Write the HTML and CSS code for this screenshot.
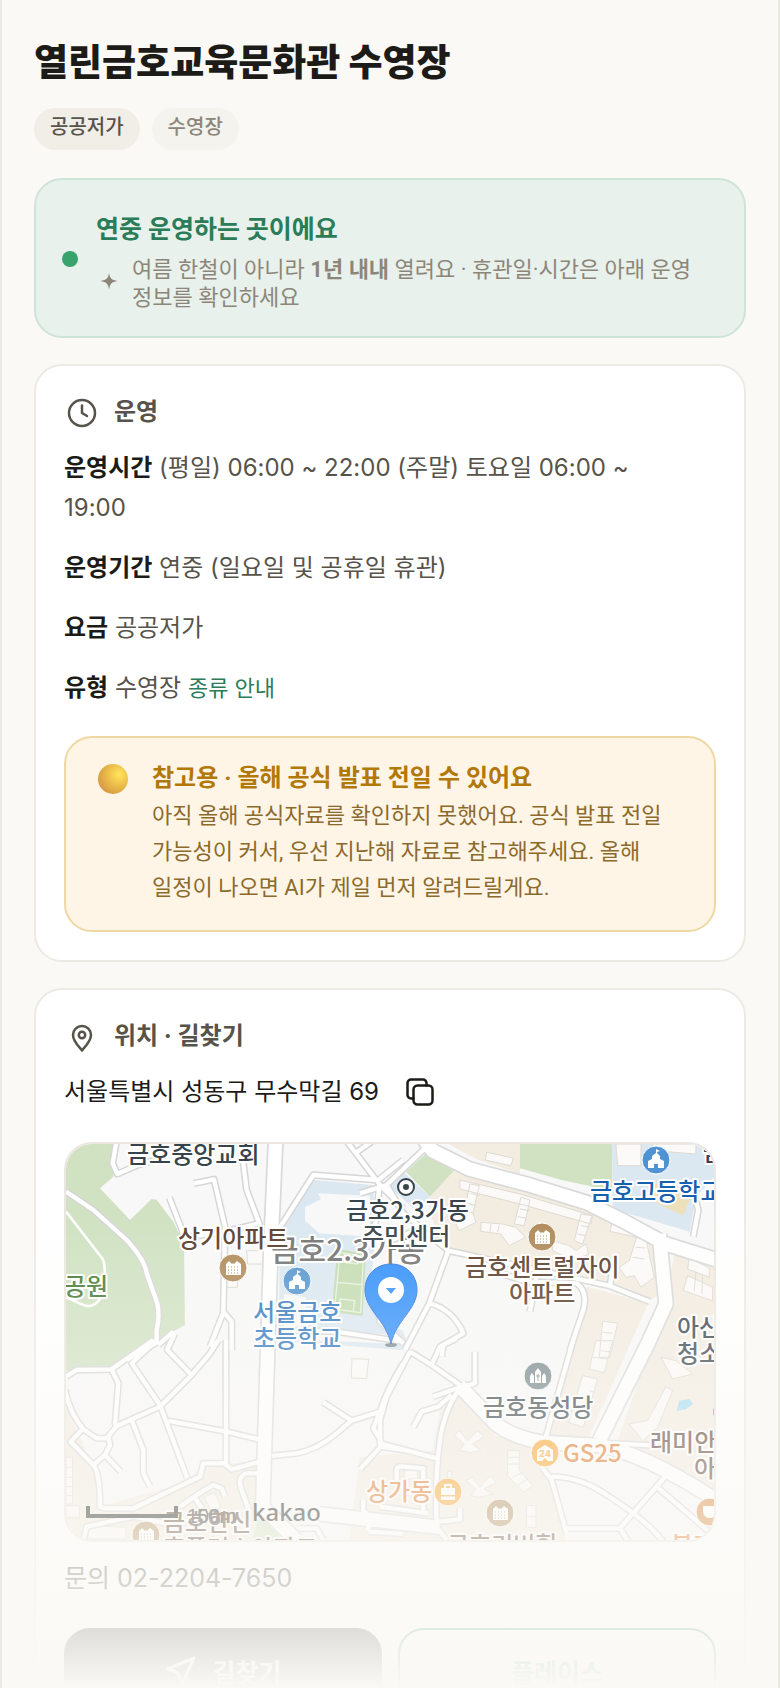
FILE: index.html
```html
<!DOCTYPE html>
<html lang="ko">
<head>
<meta charset="utf-8">
<meta name="viewport" content="width=device-width, initial-scale=1">
<title>열린금호교육문화관 수영장</title>
<link rel="stylesheet" href="styles.css">
</head>
<body>
<main class="page">
  <header class="heading">
    <h1 class="title">열린금호교육문화관 수영장</h1>
    <div class="tags">
      <span class="tag">공공저가</span>
      <span class="tag tag-soft">수영장</span>
    </div>
  </header>

  <section class="status">
    <span class="status-dot"></span>
    <div class="status-body">
      <h2 class="status-title">연중 운영하는 곳이에요</h2>
      <div class="status-note">
        <svg class="spark" viewBox="0 0 26 26" aria-hidden="true"><path d="M13 2c1 5.500 2.500 7 8.500 8-6 1-7.500 2.500-8.500 8.500-1-6-2.500-7.500-8.500-8.500 6-1 7.500-2.500 8.500-8z"/></svg>
        <p>여름 한철이 아니라 <b>1년 내내</b> 열려요 · 휴관일·시간은 아래 운영 정보를 확인하세요</p>
      </div>
    </div>
  </section>

  <section class="card">
    <h2 class="card-title">
      <svg class="card-icon" viewBox="0 0 34 34" aria-hidden="true"><circle cx="18" cy="18" r="13"/><path d="M18 10.500V18l5 3"/></svg>
      운영
    </h2>
    <div class="facts">
      <p><b>운영시간</b> (평일) 06:00 ~ 22:00 (주말) 토요일 06:00 ~ 19:00</p>
      <p><b>운영기간</b> 연중 (일요일 및 공휴일 휴관)</p>
      <p><b>요금</b> 공공저가</p>
      <p><b>유형</b> 수영장 <a class="guide" href="#types">종류 안내</a></p>
    </div>
    <div class="notice">
      <span class="ball"></span>
      <div>
        <h3 class="notice-title">참고용 · 올해 공식 발표 전일 수 있어요</h3>
        <p class="notice-text">아직 올해 공식자료를 확인하지 못했어요. 공식 발표 전일 가능성이 커서, 우선 지난해 자료로 참고해주세요. 올해 일정이 나오면 AI가 제일 먼저 알려드릴게요.</p>
      </div>
    </div>
  </section>

  <section class="card">
    <h2 class="card-title">
      <svg class="card-icon" viewBox="0 0 34 34" aria-hidden="true"><path d="M18 31.500c-1.500-2.500-9-8.500-9-15.500a9 9 0 0 1 18 0c0 7-7.500 13-9 15.500z"/><circle cx="18" cy="16" r="3.200"/></svg>
      위치 · 길찾기
    </h2>
    <div class="address">
      <span>서울특별시 성동구 무수막길 69</span>
      <button class="copy" type="button" aria-label="주소 복사">
        <svg viewBox="0 0 30 30" aria-hidden="true"><rect x="8.500" y="8.500" width="19" height="19" rx="4"/><path d="M21.500 8.500V6a3.500 3.500 0 0 0-3.500-3.500H6A3.500 3.500 0 0 0 2.500 6v12A3.500 3.500 0 0 0 6 21.500h2.500"/></svg>
      </button>
    </div>

    <svg class="map" viewBox="0 0 648 396" preserveAspectRatio="xMidYMid slice" role="img" aria-label="지도">
      <defs>
        <g id="roads-s">
          <g transform="translate(-48 -42)">
            <path d="M48 185L130 240L230 330Q285 390 290 430L322 520Q330 560 320 600V640"/>
            <path d="M200 30L188 100L202 132L262 106L350 80"/>
            <path d="M432 160L492 148L525 290L520 545L545 575V660"/>
            <path d="M578 85L590 180L628 280L520 306L410 322M358 203L396 300L400 320"/>
            <path d="M690 292L790 135L985 150L1060 90M880 20L990 165L1060 235M915 70L965 35M988 165L980 260L960 350"/>
            <path d="M520 548L480 650M370 605L325 645M375 610L350 660M320 638L230 690"/>
            <path d="M690 600L860 605L1060 635M980 480L990 575L1060 640"/>
          </g>
          <g transform="translate(942 -42)">
            <path d="M-60 190L20 165L140 50M20 165L70 250L205 362L690 468L810 515M205 362L148 520L75 660"/>
            <path d="M150 520Q220 540 250 610L190 645L185 680"/>
            <path d="M360 430L440 455L590 460Q625 485 610 540L570 660M470 440L450 545"/>
            <path d="M945 200L955 240L940 320M690 468L700 400M0 345L110 300"/>
          </g>
          <g transform="translate(-48 588)">
            <path d="M48 110L80 90L185 88L310 0M320 0L245 70L330 195L412 415"/>
            <path d="M185 88L205 130L195 255"/>
            <path d="M365 0L352 30L425 105L480 40L505 0M425 105L330 200L200 258L170 295H140L100 268Q60 220 45 150"/>
            <path d="M100 265L62 305L130 375Q150 400 150 500L165 505H250L450 410L460 370H530"/>
            <path d="M175 290L180 315L165 345L130 375M165 345L212 395M245 240L280 330V400L300 440"/>
            <path d="M355 243L530 275L632 300V365L545 388L528 375V0"/>
            <path d="M630 400H590Q560 410 575 450L600 520M390 500L440 465L490 435L515 445L525 470M430 465L455 505"/>
            <path d="M665 348L740 340Q800 330 860 280L905 242L990 215M905 242L820 187M1060 70Q1010 150 990 215L970 265L992 300V320L1060 330M992 320L930 388"/>
            <path d="M100 600L110 560L250 530L350 550M800 530L950 540H1060M745 565H800L820 600M955 575L1060 582M940 480V510L970 545L950 570"/>
          </g>
          <g transform="translate(942 588)">
            <path d="M90 35L20 170L0 240V310L170 355M90 35L155 75L240 135M155 75L180 20L230 -5M285 35V130L240 142L160 170M215 165L175 200L125 215L100 262"/>
            <path d="M235 150Q190 220 180 300Q165 400 170 560M495 300L580 0"/>
            <path d="M485 380L515 420L560 580M515 410Q600 410 680 465Q800 540 850 605M860 405L720 565H560M830 440L1005 590"/>
            <path d="M50 440V390Q50 378 70 380L130 385V515M0 500L145 520M175 545L240 538V505M170 560L200 600"/>
            <path d="M890 320L700 310M720 565L745 605"/>
          </g>
        </g>
        <g id="roads-l">
          <path d="M629 -10L615 300L605 618L590 1090L690 1188"/>
          <path d="M1070 -20L1100 20L1210 75L1380 120L1560 175L1680 235L1800 300L1960 350"/>
          <path d="M1780 270L1800 480L1745 600L1600 890"/>
          <path d="M1180 725L1290 840Q1340 880 1430 895L1600 905Q1740 930 1960 1075"/>
          <path d="M760 1110L1120 1150"/>
        </g>
        <g id="apt">
          <circle r="14"/>
          <path class="glyph" d="M-7 -4l3-3 3 3v0l1-1 1 1 3-3 4 3V7H-7z"/>
          <path class="dots" d="M-5-1H6M-5 2H6M-5 5H6"/>
        </g>
        <g id="school">
          <circle r="14"/>
          <path class="glyph" d="M-8 8V1l4-2v-3l4-3v-4l4 2-3 1v1l3 3v3l4 2v7H2V4H-2v4z"/>
        </g>
      </defs>

      <rect class="land" width="648" height="396"/>
      <g transform="scale(.3333)">
        <g class="beige">
          <path d="M1130 -10H1362V90L1230 45ZM1170 70L1740 248L1767 268L1772 458L1742 473L1632 428L1147 320L1090 210L1092 158ZM1562 428L1747 478L1560 900L1440 880L1530 560ZM1832 303L1950 330V1060L1650 905L1790 500Z"/>
          <path d="M1182 748L1290 875L1430 905L1445 1010L1500 1190H850L882 938L1100 920L1122 800ZM0 788L82 968L102 1088L350 1018L412 965L590 950L570 1190H0Z"/>
        </g>
        <g class="green">
          <path d="M0 0H157L142 98L102 133L192 228L257 165L272 167L322 233L354 298L357 543L307 570L272 603L137 670L32 680H0Z"/>
          <path d="M1362 0H1638V140L1487 108L1362 73ZM1020 83L1087 22L1170 73L1092 158ZM575 1125L690 1150L660 1190H560Z"/>
        </g>
        <g class="blue">
          <path d="M742 108L920 123L932 278L912 418L952 538L1010 560L1035 620L640 590V260ZM965 123L1012 83L1092 158L1050 200ZM1638 0H1944V100L1890 158L1872 263L1640 195Z"/>
        </g>
        <path class="land" d="M755 148L912 155V278L760 268L717 230V190L765 165ZM640 560L950 570L1010 580V600L640 585ZM655 450L720 460V560H655Z"/>
        <g class="field">
          <path d="M814 315L900 330L890 516L797 503Z"/>
          <path class="pitch" d="M822 325L892 338L884 506L806 495ZM814 415L888 422M835 328V355L875 360V335M820 496L822 465L866 470L862 500"/>
        </g>
        <path class="sand" d="M1760 115L1872 165L1852 215L1745 165Z"/>
        <path class="pond" d="M1832 800L1840 770L1870 765L1882 780L1860 796Z"/>
        <g class="blocks">
          <path d="M1182 108L1362 150L1580 215L1575 240L1362 180L1182 135ZM1212 120L1240 125L1220 210L1195 200ZM1365 160L1392 168L1375 245L1345 240ZM1545 210L1578 215L1550 300L1525 290Z"/>
          <path d="M1155 210L1220 205L1230 235L1180 260ZM1245 235L1310 240L1350 250L1378 280L1330 305L1305 270L1245 262ZM1262 25L1342 42L1335 65L1258 48ZM1460 290L1510 305L1530 320L1560 300L1568 330L1520 350L1460 320ZM1640 228L1735 255L1735 285L1632 262ZM1712 280L1740 285L1765 400L1725 430L1705 395L1680 400L1660 370L1690 350Z"/>
          <path d="M1650 0H1725V65H1655ZM1760 0H1890V30L1760 20ZM1870 342L1930 372V400L1865 375ZM1865 395L1940 430V470L1852 440ZM1610 532L1655 537L1632 640L1600 640ZM1590 590L1640 590L1615 686L1570 675ZM1550 695L1595 705L1552 850L1508 835ZM1785 640L1830 650L1880 690L1820 705ZM1800 728L1820 740L1775 850L1730 890L1690 840L1745 830Z"/>
          <path d="M1165 875L1180 860L1205 890L1235 860L1255 878L1220 900L1245 920L1215 925L1180 920L1195 900ZM1200 1010L1220 1000L1242 1030L1272 995L1290 1015L1255 1035L1280 1050L1240 1060L1215 1055L1230 1035ZM1325 920H1360V980L1400 1025L1372 1045L1325 995ZM1382 1085H1410V1150H1382ZM1145 982H1157V1000H1145ZM1015 975H1055V1005H1015ZM0 940H20V1080H0ZM0 1085H40V1120H0ZM70 1145L180 1150V1185H65ZM415 1060L445 1045L465 1090L435 1100ZM858 644L908 646L902 704L856 702ZM542 320H595V360H545ZM480 400H515V430H480Z"/>
          <path d="M1215 148L1240 155M1202 178L1230 185M1362 195L1390 200M1355 218L1380 222M1545 245L1570 248M1535 270L1560 275M1275 240L1272 265M1300 242L1295 265M1610 565L1640 568M1605 620L1635 624M1580 640L1625 645M1570 740L1582 744M1530 760L1575 775M1520 800L1565 812M1710 310L1738 312M1700 340L1735 345M1890 385L1885 440M1910 395L1908 450M1325 940H1360M1325 960H1360M1340 1000L1370 985M1355 1025L1385 1005M0 970H20M0 1000H20M0 1028H20M0 1055H20M1382 1118H1410"/>
        </g>
        <use class="case-s" href="#roads-s"/>
        <use class="case-l" href="#roads-l"/>
        <use class="fill-s" href="#roads-s"/>
        <use class="fill-l" href="#roads-l"/>
        <path class="trail" d="M0 203L110 345Q120 365 115 440Q90 500 50 482L0 460"/>
      </g>

      <text class="label district" x="205" y="117">금호2.3가동</text>
      <g class="label">
        <text class="ink" x="61" y="19">금호중앙교회</text>
        <text class="ink" x="280" y="75">금호2,3가동</text>
        <text class="ink" x="296" y="101">주민센터</text>
        <text class="brown" x="112" y="103">상기아파트</text>
        <text class="park" x="-2" y="151">공원</text>
        <text class="sky" x="187" y="177">서울금호</text>
        <text class="sky" x="187" y="203">초등학교</text>
        <text class="brown" x="399" y="132">금호센트럴자이</text>
        <text class="brown" x="443" y="158">아파트</text>
        <text class="navy" x="524" y="56">금호고등학교</text>
        <text class="ink" x="637" y="17">금</text>
        <text class="ink" x="611" y="192">아산</text>
        <text class="ink" x="611" y="218">청소</text>
        <text class="ink" x="417" y="272">금호동성당</text>
        <text class="brown" x="584" y="307">래미안</text>
        <text class="brown" x="628" y="333">아</text>
        <text class="orange" x="497" y="318">GS25</text>
        <text class="orange" x="300" y="356">상가동</text>
        <text class="orange" x="605" y="410">불가</text>
        <text class="brown" x="381" y="410">금호리버힐</text>
        <text class="brown" x="97" y="387">금호한신</text>
        <text class="brown" x="97" y="413">휴플러스아파트</text>
      </g>

      <use class="poi poi-brown" href="#apt" x="167" y="124"/>
      <use class="poi poi-brown" href="#apt" x="476" y="93"/>
      <use class="poi poi-brown" href="#apt" x="434" y="369"/>
      <use class="poi poi-brown" href="#apt" x="80" y="391"/>
      <use class="poi poi-sky" href="#school" x="231" y="137"/>
      <use class="poi poi-blue" href="#school" x="590" y="16"/>
      <g class="poi poi-slate" transform="translate(472 232)">
        <circle r="14"/>
        <path class="glyph" d="M-8 7V0l2-3 2 3v7zM4 7V0l2-3 2 3v7zM-3 7V-4L0-8l3 4V7z"/>
        <path class="cross" d="M0-2V5M-2 0H2"/>
      </g>
      <g class="poi poi-orange" transform="translate(479 309)">
        <circle r="14"/>
        <path class="glyph" d="M-8 8V-3l8-5 8 5V8H3L0 5-3 8z"/>
        <text class="hours" y="4">24</text>
      </g>
      <g class="poi poi-orange" transform="translate(382 348)">
        <circle r="14"/>
        <path class="glyph" d="M-7-4H7V3H-7zM-7 4.500H7V8H-7z"/>
        <path class="handle" d="M-3-4v-3h6v3"/>
      </g>
      <g class="poi poi-cafe" transform="translate(644 368)">
        <circle r="14"/>
        <path class="glyph" d="M-7-6H6V0q0 6-6 6t-7-6z"/>
      </g>
      <circle class="poi-cafe" cx="657" cy="268" r="10"/>
      <g class="office"><circle cx="340" cy="43" r="8"/><circle class="office-dot" cx="340" cy="43" r="3"/></g>

      <g class="pin">
        <ellipse class="pin-shadow" cx="325" cy="201" rx="6" ry="2"/>
        <path class="pin-body" d="M325 120c-15 0-26 11-26 26 0 20 21 30 26 54 5-24 26-34 26-54 0-15-11-26-26-26z"/>
        <circle class="glyph" cx="325" cy="146" r="13"/>
        <path class="pin-mark" d="M320 144h10l-5 6z"/>
      </g>

      <path class="scale" d="M22 362v10h88v-10"/>
      <text class="scale-text" x="121" y="379">100m</text>
      <text class="scale-text" x="131" y="379">50m</text>
      <text class="brand" x="186" y="377">kakao</text>
    </svg>

    <p class="contact">문의 02-2204-7650</p>
    <div class="actions">
      <button class="btn btn-dark" type="button">
        <svg viewBox="0 0 34 34" aria-hidden="true"><path d="M30 4L4 15l10 4 4 11z"/></svg>
        길찾기
      </button>
      <button class="btn" type="button">플레이스</button>
    </div>
  </section>
  <div class="fade"></div>
</main>
</body>
</html>
```
FILE: styles.css
```css
* {
  box-sizing: border-box;
}

body {
  margin: 0;
  background: #faf9f5;
  color: #1c1b18;
  font-family: Inter, "Noto Sans CJK KR", sans-serif;
  font-size: 24px;
  word-break: keep-all;
}

h1, h2, h3, p {
  margin: 0;
}

.page {
  position: relative;
  display: flex;
  flex-direction: column;
  gap: 26px;
  height: 100vh;
  overflow: hidden;
  padding: 34px 32px 0;
  border: solid #ebeae3;
  border-width: 0 2px;
}

.page > * {
  flex-shrink: 0;
}

.title {
  font-size: 37px;
  font-weight: 800;
  line-height: 58px;
}

.tags {
  display: flex;
  gap: 12px;
  margin: 16px 0 2px;
}

.tag {
  padding: 0 16px 4px;
  border-radius: 21px;
  background: #f0eee7;
  color: #57534a;
  font-size: 20px;
  font-weight: 500;
  line-height: 38px;
}

.tag-soft {
  background: #f4f3ee;
  color: #8c867a;
}

.status {
  display: flex;
  align-items: center;
  gap: 18px;
  padding: 26px 26px 24px;
  border: 2px solid #cfe4d8;
  border-radius: 28px;
  background: #e8f1eb;
}

.status-dot {
  flex: none;
  width: 16px;
  height: 16px;
  border-radius: 50%;
  background: #38a36d;
}

.status-title {
  color: #2a7d58;
  font-size: 25px;
  font-weight: 700;
  line-height: 46px;
}

.status-note {
  display: flex;
  align-items: center;
  gap: 10px;
  padding-top: 4px;
  color: #8c867a;
  font-family: Roboto, "Noto Sans CJK KR", sans-serif;
  font-size: 22px;
  line-height: 28px;
}

.spark {
  flex: none;
  width: 26px;
  height: 26px;
  fill: #8c867a;
}

.card {
  padding: 28px;
  border: 2px solid #ebeae3;
  border-radius: 28px;
  background: #ffffff;
}

.card-title {
  display: flex;
  align-items: center;
  gap: 16px;
  color: #57534a;
  font-size: 24px;
  font-weight: 700;
  line-height: 36px;
}

.card-icon {
  width: 34px;
  height: 34px;
  fill: none;
  stroke: #57534a;
  stroke-width: 2.5;
  stroke-linecap: round;
  stroke-linejoin: round;
}

.facts {
  display: grid;
  gap: 20px;
  padding: 18px 40px 28px 0;
  color: #57534a;
  line-height: 40px;
}

.facts b {
  color: #1c1b18;
}

.guide {
  color: #2a7d58;
  font-size: 22px;
  text-decoration: none;
}

.notice {
  display: flex;
  gap: 24px;
  padding: 22px 32px 24px;
  border: 2px solid #efd9a3;
  border-radius: 28px;
  background: #fff5e6;
  font-family: Roboto, "Noto Sans CJK KR", sans-serif;
}

.ball {
  flex: none;
  width: 30px;
  height: 30px;
  margin-top: 4px;
  border-radius: 50%;
  background: radial-gradient(circle at 70% 35%, #ffe45c 0%, #f0c24c 35%, #dca544 65%, #d98a50 90%, #dd7d68 100%);
}

.notice-title {
  color: #b27808;
  font-size: 24px;
  font-weight: 700;
  line-height: 36px;
}

.notice-text {
  padding-top: 2px;
  color: #8c6a2c;
  font-size: 22px;
  line-height: 36px;
}

.address {
  display: flex;
  align-items: center;
  gap: 26px;
  padding: 18px 0 30px;
  line-height: 40px;
}

.copy {
  display: flex;
  padding: 0;
  border: 0;
  background: none;
}

.copy svg {
  width: 30px;
  height: 30px;
  fill: none;
  stroke: #1c1b18;
  stroke-width: 2.5;
  stroke-linecap: round;
}

.map {
  display: block;
  width: 100%;
  border: 2px solid #ebe7e0;
  border-radius: 28px;
  overflow: hidden;
}

.land { fill: #f8f8f8; }
.beige { fill: #f3ece1; }
.green { fill: #d0e2c2; }
.blue { fill: #dbe8f1; }
.sand { fill: #ece0bd; }
.pond { fill: #a5dcf2; }
.field { fill: #c4dcb2; }
.pitch { fill: none; stroke: #e8f2e0; stroke-width: 4; }
.blocks { fill: #fbfaf8; stroke: #dedad2; stroke-width: 3; }

.case-s, .fill-s, .case-l, .fill-l, .trail {
  fill: none;
  stroke-linejoin: round;
}

.case-s { stroke: #d6d6d6; stroke-width: 22; }
.fill-s { stroke: #ffffff; stroke-width: 13; }
.case-l { stroke: #d9d9d9; stroke-width: 50; }
.fill-l { stroke: #ffffff; stroke-width: 40; }
.trail { stroke: #ffffff; stroke-width: 8; }

.label {
  font-family: "Noto Sans CJK KR", sans-serif;
  font-size: 24px;
  font-weight: 500;
  stroke: #ffffff;
  stroke-width: 4;
  stroke-linejoin: round;
  paint-order: stroke;
}

.district { fill: #757575; font-size: 30px; }
.ink { fill: #37444b; }
.brown { fill: #5a3e2c; }
.park { fill: #457a30; }
.sky { fill: #3279c0; }
.navy { fill: #1660b0; }
.orange { fill: #df711d; }

.poi { stroke: #ffffff; stroke-width: 1; }
.poi-brown { fill: #b08b5a; }
.poi-sky { fill: #5797d0; }
.poi-blue { fill: #4f93d2; }
.poi-slate { fill: #76858b; }
.poi-orange { fill: #f8a428; }
.poi-cafe { fill: #d98135; }
.glyph { fill: #ffffff; stroke: none; }
.dots { fill: none; stroke: #b08b5a; stroke-dasharray: 1 2; }
.cross { fill: none; stroke: #76858b; }
.handle { fill: none; stroke-width: 2; }

.hours {
  fill: #f8a428;
  stroke: none;
  font-size: 9px;
  font-weight: 800;
  text-anchor: middle;
}

.office { fill: #ffffff; stroke: #37444b; stroke-width: 2; }
.office-dot { fill: #37444b; stroke: none; }
.pin-shadow { fill: #404a55; opacity: 0.6; }
.pin-body { fill: #3391fb; stroke: #2b77d8; stroke-width: 1; }
.pin-mark { fill: #3391fb; }
.scale { fill: none; stroke: #111111; stroke-width: 4; }

.scale-text {
  fill: #333333;
  font-family: "Liberation Sans", sans-serif;
  font-size: 20px;
}

.brand {
  fill: #111111;
  font-family: "Noto Sans", sans-serif;
  font-size: 24px;
  font-weight: 500;
}

.contact {
  padding: 16px 0 30px;
  color: #57534a;
  font-size: 25px;
  line-height: 40px;
}

.actions {
  display: flex;
  gap: 16px;
}

.btn {
  display: flex;
  flex: 1;
  align-items: center;
  justify-content: center;
  gap: 14px;
  height: 86px;
  border: 2px solid #2a7d58;
  border-radius: 26px;
  background: #ffffff;
  color: #2a7d58;
  font: inherit;
  font-size: 25px;
  font-weight: 700;
}

.btn-dark {
  border-color: #1c1b18;
  background: #1c1b18;
  color: #ffffff;
}

.btn svg {
  width: 34px;
  height: 34px;
  fill: none;
  stroke: currentColor;
  stroke-width: 3;
  stroke-linejoin: round;
}

.fade {
  position: absolute;
  right: 0;
  bottom: 0;
  left: 0;
  height: 480px;
  background: linear-gradient(to bottom, rgba(250, 249, 245, 0), #faf9f5);
  pointer-events: none;
}
```
